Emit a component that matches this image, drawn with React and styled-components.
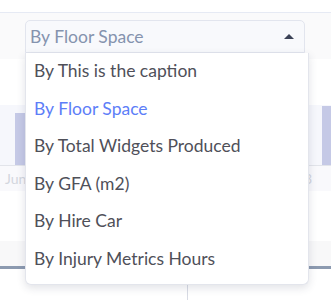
import { useState } from "react";
import styled, { createGlobalStyle } from "styled-components";

const GlobalStyle = createGlobalStyle`
  html, body {
    margin: 0;
    padding: 0;
    background: #ffffff;
    font-family: "Lato", "Open Sans", sans-serif;
  }
`

const Page = styled.div`
  width: 331px;
  height: 300px;
  overflow: hidden;
  position: relative;
`
const TopBar = styled.div`
  height: 12px;
  border-bottom: 1px solid #e6eaf4;
`
const FilterBand = styled.div`
  height: 46px;
  background: #fafafb;
  padding: 7px 26px 0 25px;
  box-sizing: border-box;
`
const SelectWrap = styled.div`
  position: relative;
  width: 280px;
`
const SelectBox = styled.div`
  height: 33px;
  box-sizing: border-box;
  display: flex;
  align-items: center;
  justify-content: space-between;
  padding: 0 10px 1px 4px;
  background: #f8f9fc;
  border: 1px solid #e2e5ee;
  border-radius: 5px 5px 0 0;
  font-size: 17.5px;
  color: #8593ae;
`
const Caret = styled.span`
  width: 0;
  height: 0;
  border-left: 5px solid transparent;
  border-right: 5px solid transparent;
  border-bottom: 5px solid #3b4256;
`
const Menu = styled.ul`
  position: absolute;
  top: 33px;
  left: 0;
  width: 282px;
  margin: 0;
  padding: 0 0 6px;
  list-style: none;
  background: #ffffff;
  border: 1px solid #e3e5ec;
  border-top: none;
  border-radius: 0 0 6px 6px;
  box-shadow: 0 3px 8px rgba(40, 50, 80, 0.14);
  z-index: 5;
`
const MenuItem = styled.li`
  height: 37.5px;
  display: flex;
  align-items: center;
  padding: 0 0 2px 8px;
  box-sizing: border-box;
  font-size: 17.5px;
  color: ${p => (p.$active ? "#5d7ef8" : "#4f5059")};
`
const Gap = styled.div`
  height: ${p => p.$h}px;
`
const Chart = styled.div`
  height: 60px;
  background: #f6f7fc;
  border-bottom: 1px solid #e2e4ea;
  display: flex;
  align-items: flex-end;
  justify-content: space-between;
  padding: 0 0 0 15px;
`
const Bar = styled.div`
  width: ${p => p.$w}px;
  height: ${p => p.$h}px;
  background: #c5c9e6;
`
const AxisLabels = styled.div`
  height: 25px;
  background: #f9f9fc;
  display: flex;
  align-items: center;
  justify-content: space-between;
  padding: 0 19px 0 5px;
  font-size: 14px;
  color: #d3d6de;
`
const TableHeadBand = styled.div`
  height: 25px;
  background: #f8f8f9;
`
const HeadRule = styled.div`
  height: 3px;
  background: #8c9ab0;
`
const TableBody = styled.div`
  display: grid;
  grid-template-columns: 188px 1fr;
  height: 40px;
`
const Cell = styled.div`
  border-right: ${p => (p.$divider ? "1px solid #d8dbe4" : "none")};
`

const options = [
  "By This is the caption",
  "By Floor Space",
  "By Total Widgets Produced",
  "By GFA (m2)",
  "By Hire Car",
  "By Injury Metrics Hours",
];

export default function App() {
  const [selected] = useState("By Floor Space");

  return (
    <Page>
      <GlobalStyle />
      <TopBar />
      <FilterBand>
        <SelectWrap>
          <SelectBox>
            <span>{selected}</span>
            <Caret />
          </SelectBox>
          <Menu>
            {options.map(opt => (
              <MenuItem key={opt} $active={opt === selected}>{opt}</MenuItem>
            ))}
          </Menu>
        </SelectWrap>
      </FilterBand>
      <Gap $h={46} />
      <Chart>
        <Bar $w={10} $h={52} />
        <Bar $w={9} $h={59} />
      </Chart>
      <AxisLabels>
        <span>Jun</span>
        <span>3</span>
      </AxisLabels>
      <Gap $h={50} />
      <TableHeadBand />
      <HeadRule />
      <TableBody>
        <Cell $divider />
        <Cell />
      </TableBody>
    </Page>
  );
}
